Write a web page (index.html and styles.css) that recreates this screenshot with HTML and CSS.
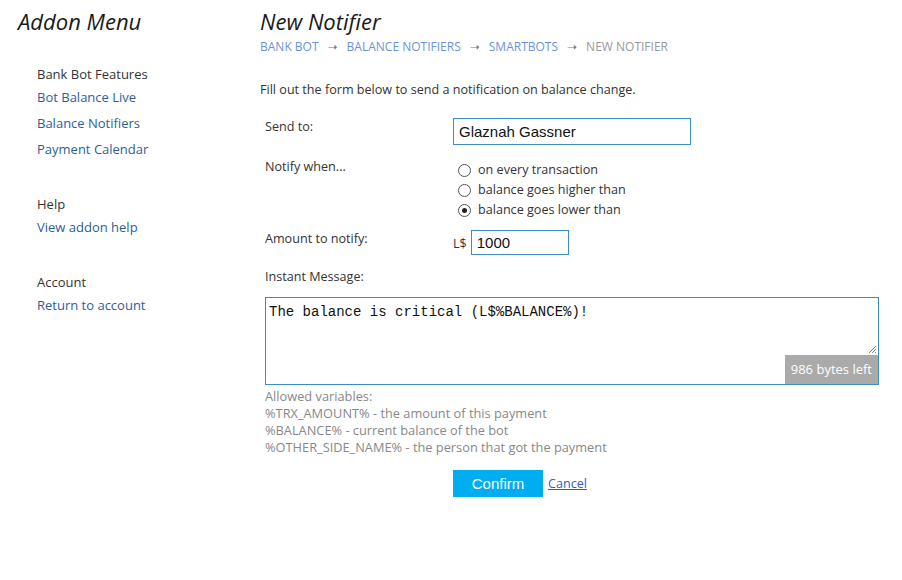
FILE: index.html
```html
<!DOCTYPE html>
<html>
<head>
<meta charset="utf-8">
<link rel="stylesheet" href="styles.css">
</head>
<body>
<div class="page">
  <aside class="sidebar">
    <h1 class="title">Addon Menu</h1>
    <div class="group">
      <div class="group-head">Bank Bot Features</div>
      <a class="nav-link" href="#">Bot Balance Live</a>
      <a class="nav-link" href="#">Balance Notifiers</a>
      <a class="nav-link" href="#">Payment Calendar</a>
    </div>
    <div class="group">
      <div class="group-head">Help</div>
      <a class="nav-link" href="#">View addon help</a>
    </div>
    <div class="group">
      <div class="group-head">Account</div>
      <a class="nav-link" href="#">Return to account</a>
    </div>
  </aside>
  <main class="main">
    <h1 class="title">New Notifier</h1>
    <div class="crumbs">
      <a href="#">BANK BOT</a><span class="arrow">&#10141;</span><a href="#">BALANCE NOTIFIERS</a><span class="arrow">&#10141;</span><a href="#">SMARTBOTS</a><span class="arrow">&#10141;</span><span class="current">NEW NOTIFIER</span>
    </div>
    <p class="intro">Fill out the form below to send a notification on balance change.</p>
    <div class="form">
      <div class="row row-send">
        <label class="label">Send to:</label>
        <div class="field"><input class="text-input name-input" type="text" value="Glaznah Gassner"></div>
      </div>
      <div class="row row-notify">
        <label class="label">Notify when...</label>
        <div class="field radios">
          <label class="radio"><span class="dot"></span>on every transaction</label>
          <label class="radio"><span class="dot"></span>balance goes higher than</label>
          <label class="radio"><span class="dot checked"></span>balance goes lower than</label>
        </div>
      </div>
      <div class="row row-amount">
        <label class="label">Amount to notify:</label>
        <div class="field amount"><span class="cur">L$</span><input class="text-input amount-input" type="text" value="1000"></div>
      </div>
      <div class="im-label">Instant Message:</div>
      <div class="im-box">
        <textarea class="im-text">The balance is critical (L$%BALANCE%)!</textarea>
        <svg class="grip" width="9" height="9" viewBox="0 0 9 9"><path d="M8 1 L1 8 M8 4 L4 8 M8 7 L7 8" stroke="#888" stroke-width="1" fill="none"/></svg>
        <span class="bytes">986 bytes left</span>
      </div>
      <div class="vars">
        <div>Allowed variables:</div>
        <div>%TRX_AMOUNT% - the amount of this payment</div>
        <div>%BALANCE% - current balance of the bot</div>
        <div>%OTHER_SIDE_NAME% - the person that got the payment</div>
      </div>
      <div class="actions">
        <button class="confirm" type="button">Confirm</button>
        <a class="cancel" href="#">Cancel</a>
      </div>
    </div>
  </main>
</div>
</body>
</html>
```
FILE: styles.css
```css
html, body {
  margin: 0;
  padding: 0;
  background: #fff;
}
body {
  font-family: "Open Sans", "DejaVu Sans", sans-serif;
  font-size: 12.6px;
  color: #333;
}
.page {
  display: flex;
}
.sidebar {
  width: 242px;
  padding-left: 18px;
  box-sizing: border-box;
  font-size: 13px;
}
.title {
  margin: 0;
  padding-top: 6px;
  font-size: 22px;
  font-weight: normal;
  font-style: italic;
  color: #1a1a1a;
  line-height: 30px;
}
.group {
  padding-left: 19px;
  display: flex;
  flex-direction: column;
  margin-bottom: 32px;
}
.sidebar .group:first-of-type {
  margin-top: 28px;
}
.group-head {
  line-height: 20px;
  color: #333;
}
.nav-link {
  color: #2d5e98;
  text-decoration: none;
  line-height: 26px;
}
.main {
  flex: 1;
  padding-left: 18px;
}
.crumbs {
  font-size: 12px;
  line-height: 16px;
  color: #999;
  margin-top: 3px;
}
.crumbs a {
  color: #6b93d6;
  text-decoration: none;
}
.crumbs .arrow {
  color: #777;
  margin: 0 9px;
  font-size: 12px;
}
.crumbs .current {
  color: #999;
}
.intro {
  margin: 26px 0 0;
  line-height: 18px;
}
.form {
  padding-left: 5px;
  width: 614px;
  margin-top: 19px;
}
.row {
  display: flex;
}
.label {
  width: 188px;
  flex: none;
}
.row-send {
  height: 40px;
}
.text-input {
  font-family: "Liberation Sans", Arial, sans-serif;
  font-size: 15px;
  color: #111;
  border: 1px solid #3b8ec5;
  box-sizing: border-box;
  outline: none;
  padding: 0 5px;
}
.name-input {
  width: 238px;
  height: 27px;
}
.row-notify {
  height: 72px;
}
.radios {
  display: flex;
  flex-direction: column;
  padding-top: 2px;
}
.radio {
  display: flex;
  align-items: center;
  line-height: 20px;
  height: 20px;
  padding-left: 5px;
}
.dot {
  border: 1px solid #555;
  border-radius: 50%;
  margin-right: 7px;
  position: relative;
  box-sizing: border-box;
  width: 13px;
  height: 13px;
}
.dot.checked::after {
  content: "";
  position: absolute;
  left: 3px;
  top: 3px;
  width: 5px;
  height: 5px;
  border-radius: 50%;
  background: #222;
}
.amount {
  display: flex;
  align-items: center;
}
.cur {
  margin-right: 4px;
  margin-top: 2px;
}
.amount-input {
  width: 98px;
  height: 25px;
}
.row-amount {
  height: 38px;
  align-items: flex-start;
}
.im-label {
  line-height: 18px;
  margin-bottom: 11px;
}
.im-box {
  position: relative;
  width: 614px;
  height: 88px;
}
.im-text {
  width: 614px;
  height: 88px;
  box-sizing: border-box;
  border: 1px solid #3b8ec5;
  font-family: "Liberation Mono", "DejaVu Sans Mono", monospace;
  font-size: 14px;
  padding: 6px 3px;
  resize: none;
  outline: none;
  color: #111;
  display: block;
}
.grip {
  position: absolute;
  right: 2px;
  bottom: 31px;
}
.bytes {
  position: absolute;
  right: 1px;
  bottom: 1px;
  background: #aaa;
  color: #fff;
  font-size: 13px;
  line-height: 29px;
  padding: 0 6px;
}
.vars {
  color: #888;
  line-height: 17px;
  margin-top: 3px;
  font-size: 12.8px;
}
.actions {
  margin-top: 14px;
  padding-left: 188px;
  display: flex;
  align-items: center;
}
.confirm {
  width: 90px;
  height: 27px;
  border: none;
  background: #00adf0;
  color: #fff;
  font-family: "Liberation Sans", Arial, sans-serif;
  font-size: 15px;
  padding: 0;
}
.cancel {
  margin-left: 5px;
  color: #2d5ec8;
  font-size: 12.6px;
}
```
